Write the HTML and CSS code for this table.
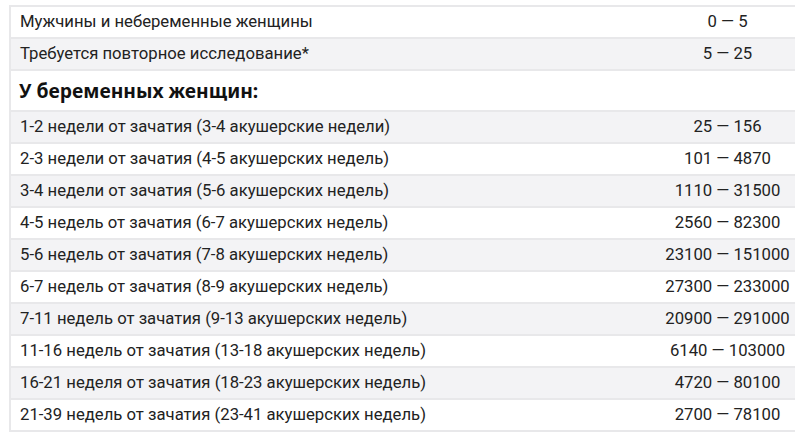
FILE: index.html
```html
<!DOCTYPE html>
<html lang="ru">
<head>
<meta charset="utf-8">
<link rel="stylesheet" href="styles.css">
</head>
<body>
<div class="wrap">
<table class="norms">
<tbody>
<tr><td class="name">Мужчины и небеременные женщины</td><td class="val">0 — 5</td></tr>
<tr class="alt"><td class="name">Требуется повторное исследование*</td><td class="val">5 — 25</td></tr>
<tr class="head"><td class="name" colspan="2">У беременных женщин:</td></tr>
<tr class="alt"><td class="name">1-2 недели от зачатия (3-4 акушерские недели)</td><td class="val">25 — 156</td></tr>
<tr><td class="name">2-3 недели от зачатия (4-5 акушерских недель)</td><td class="val">101 — 4870</td></tr>
<tr class="alt"><td class="name">3-4 недели от зачатия (5-6 акушерских недель)</td><td class="val">1110 — 31500</td></tr>
<tr><td class="name">4-5 недель от зачатия (6-7 акушерских недель)</td><td class="val">2560 — 82300</td></tr>
<tr class="alt"><td class="name">5-6 недель от зачатия (7-8 акушерских недель)</td><td class="val">23100 — 151000</td></tr>
<tr><td class="name">6-7 недель от зачатия (8-9 акушерских недель)</td><td class="val">27300 — 233000</td></tr>
<tr class="alt"><td class="name">7-11 недель от зачатия (9-13 акушерских недель)</td><td class="val">20900 — 291000</td></tr>
<tr><td class="name">11-16 недель от зачатия (13-18 акушерских недель)</td><td class="val">6140 — 103000</td></tr>
<tr class="alt"><td class="name">16-21 неделя от зачатия (18-23 акушерских недель)</td><td class="val">4720 — 80100</td></tr>
<tr><td class="name">21-39 недель от зачатия (23-41 акушерских недель)</td><td class="val">2700 — 78100</td></tr>
</tbody>
</table>
</div>
</body>
</html>
```
FILE: styles.css
```css
html, body {
  margin: 0;
  padding: 0;
  background: #ffffff;
  overflow: hidden;
}
.wrap {
  padding: 5px 0 0 9px;
  width: 800px;
}
.norms {
  width: 790px;
  border-collapse: collapse;
  font-family: Roboto, "Liberation Sans", sans-serif;
  font-size: 16.7px;
  color: #222222;
}
.norms td {
  border: 2px solid #e8e8ea;
  height: 32px;
  padding: 0 0 0 9px;
  vertical-align: middle;
  line-height: 20px;
  box-sizing: border-box;
}
.norms td.name {
  border-right: none;
}
.norms td.val {
  width: 140px;
  padding: 0;
  text-align: center;
  border-left: none;
}
.norms tr.alt td {
  background: #f3f3f5;
}
.norms tr.head td {
  height: 41px;
  font-family: "Noto Sans", "Open Sans", sans-serif;
  font-weight: 700;
  font-size: 19.3px;
  color: #111111;
  padding-left: 8px;
  padding-top: 0;
}
```
